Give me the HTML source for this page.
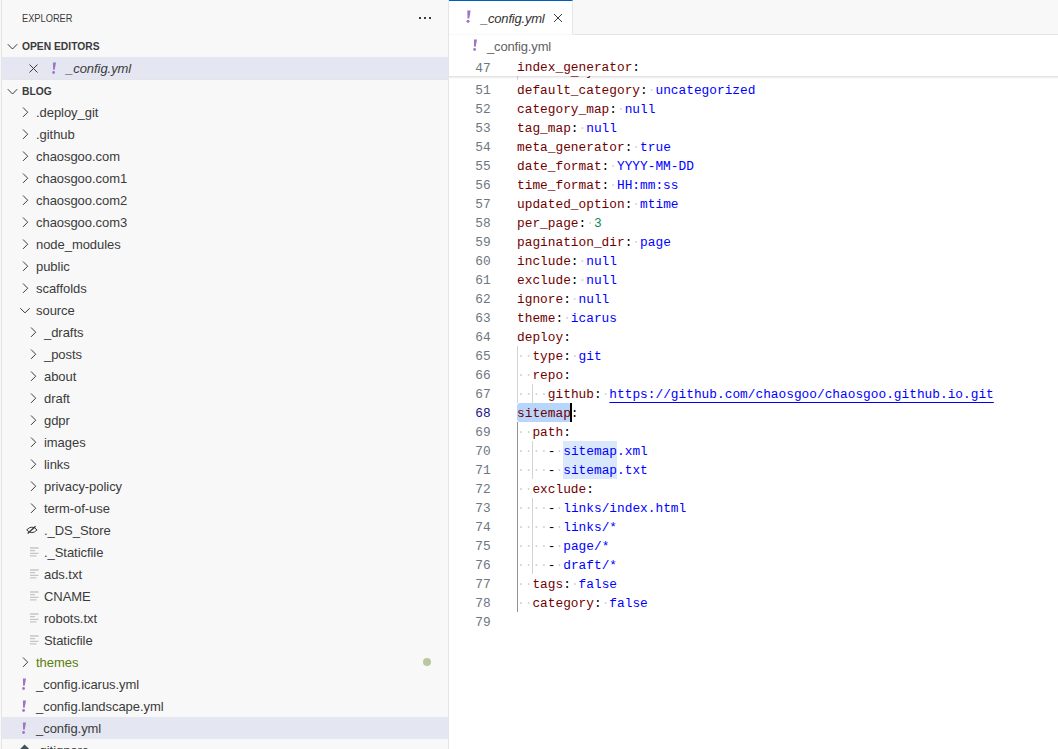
<!DOCTYPE html>
<html><head><meta charset="utf-8"><style>
*{box-sizing:border-box}
html,body{margin:0;padding:0}
body{width:1058px;height:749px;overflow:hidden;position:relative;background:#f8f8f8;font-family:"Liberation Sans",sans-serif;color:#3b3b3b}
.sb{position:absolute;left:0;top:0;width:449px;height:749px;background:#f8f8f8;border-right:1px solid #e5e5e5}
.lb{position:absolute;left:1px;top:0;width:1px;height:749px;background:#e5e5e5}
.title{position:absolute;left:22px;top:11px;font-size:10.6px;line-height:14px;letter-spacing:0;transform:scaleX(0.875);transform-origin:0 0;color:#3b3b3b}
.dots{position:absolute;top:17px;width:2px;height:2px;background:#3b3b3b}
.hdr{position:absolute;left:22px;font-size:11px;font-weight:bold;line-height:22px;height:22px;transform:scaleX(0.935);transform-origin:0 0;color:#3b3b3b}
.r{position:absolute;left:2px;width:446px;height:22px;line-height:22px;font-size:13px;white-space:nowrap}
.r .t{position:absolute;top:1px;letter-spacing:-0.05px}
.r.sel{background:#e4e6f1}
.ic{position:absolute}
.gdot{position:absolute;left:423px;width:8px;height:8px;border-radius:50%;background:#b9c8a0}
.ed{position:absolute;left:449px;top:0;width:609px;height:749px;background:#fff}
.tabs{position:absolute;left:449px;top:0;width:609px;height:35px;background:#f8f8f8;border-bottom:1px solid #e5e5e5}
.tab{position:absolute;left:449px;top:0;width:124px;height:35px;background:#fff;border-right:1px solid #e5e5e5;border-top:1px solid #005fb8;border-bottom:1px solid #f8f8f8}
.tabt{position:absolute;left:481px;top:1px;font-size:13px;line-height:35px;font-style:italic;letter-spacing:-0.2px;color:#333}
.bc{position:absolute;left:487px;top:36px;font-size:13px;line-height:22px;color:#616161;letter-spacing:-0.15px}
.num{position:absolute;left:449px;width:41.6px;text-align:right;height:19px;line-height:19px;font-family:"Liberation Mono",monospace;font-size:12.82px;color:#6e7681}
.num.act{color:#171184}
.cl{position:absolute;left:517px;height:19px;line-height:19px;font-family:"Liberation Mono",monospace;font-size:12.82px;white-space:pre;color:#000}
.cl b{font-weight:normal;color:#700000}
.cl s{text-decoration:none;color:#000}
.cl i{font-style:normal;color:rgba(51,51,51,0.25)}
.cl em{font-style:normal;color:#0000ff}
.cl u.n{text-decoration:none;color:#098658}
.cl .lk{color:#0000ff;text-decoration:underline;text-underline-offset:4px}
.g{position:absolute;width:1px}
.sticky{position:absolute;left:449px;top:57px;width:609px;height:19px;background:#fff}
.shd{position:absolute;left:449px;top:76px;width:609px;height:3px;background:linear-gradient(rgba(0,0,0,0.14),rgba(0,0,0,0.07) 40%,rgba(0,0,0,0))}
.selx{position:absolute;background:#b8d6fb;border-radius:3px}
.hl{position:absolute;background:#dae8fb}
.cur{position:absolute;width:2px;background:#000}
</style></head><body>
<div class="sb"></div>
<div class="lb"></div>
<div class="title">EXPLORER</div>
<div class="dots" style="left:419px"></div><div class="dots" style="left:424px"></div><div class="dots" style="left:429px"></div>
<svg class="ic" style="left:7px;top:43px" width="11" height="8" viewBox="0 0 11 8"><path d="M0.8 1.2 L5.5 6 L10.2 1.2" fill="none" stroke="#3a3a3a" stroke-width="1"/></svg>
<div class="hdr" style="top:35px">OPEN EDITORS</div>
<div class="r sel" style="top:57px"><svg class="ic" style="left:27px;top:7px" width="9" height="9" viewBox="0 0 9 9"><path d="M0.5 0.5L8.5 8.5M8.5 0.5L0.5 8.5" stroke="#3b3b3b" stroke-width="1"/></svg><svg class="ic" style="left:49px;top:5px" width="6" height="13" viewBox="0 0 6 13"><path d="M1.9 0.4 L5.0 0.4 L3.7 7.8 L2.1 7.8 Z" fill="#a074c4"/><circle cx="2.6" cy="10.5" r="1.4" fill="#a074c4"/></svg><span class="t" style="left:64px;font-style:italic">_config.yml</span></div>
<svg class="ic" style="left:7px;top:88px" width="11" height="8" viewBox="0 0 11 8"><path d="M0.8 1.2 L5.5 6 L10.2 1.2" fill="none" stroke="#3a3a3a" stroke-width="1"/></svg>
<div style="position:absolute;left:2px;top:79px;width:446px;height:1px;background:#e5e5e5"></div>
<div class="hdr" style="top:80px">BLOG</div>
<div class="r" style="top:101px"><svg class="ic" style="left:19px;top:6px" width="8" height="11" viewBox="0 0 8 11"><path d="M2 0.5 L6.7 5.2 L2 9.9" fill="none" stroke="#3a3a3a" stroke-width="1"/></svg><span class="t" style="left:34px;">.deploy_git</span></div>
<div class="r" style="top:123px"><svg class="ic" style="left:19px;top:6px" width="8" height="11" viewBox="0 0 8 11"><path d="M2 0.5 L6.7 5.2 L2 9.9" fill="none" stroke="#3a3a3a" stroke-width="1"/></svg><span class="t" style="left:34px;">.github</span></div>
<div class="r" style="top:145px"><svg class="ic" style="left:19px;top:6px" width="8" height="11" viewBox="0 0 8 11"><path d="M2 0.5 L6.7 5.2 L2 9.9" fill="none" stroke="#3a3a3a" stroke-width="1"/></svg><span class="t" style="left:34px;">chaosgoo.com</span></div>
<div class="r" style="top:167px"><svg class="ic" style="left:19px;top:6px" width="8" height="11" viewBox="0 0 8 11"><path d="M2 0.5 L6.7 5.2 L2 9.9" fill="none" stroke="#3a3a3a" stroke-width="1"/></svg><span class="t" style="left:34px;">chaosgoo.com1</span></div>
<div class="r" style="top:189px"><svg class="ic" style="left:19px;top:6px" width="8" height="11" viewBox="0 0 8 11"><path d="M2 0.5 L6.7 5.2 L2 9.9" fill="none" stroke="#3a3a3a" stroke-width="1"/></svg><span class="t" style="left:34px;">chaosgoo.com2</span></div>
<div class="r" style="top:211px"><svg class="ic" style="left:19px;top:6px" width="8" height="11" viewBox="0 0 8 11"><path d="M2 0.5 L6.7 5.2 L2 9.9" fill="none" stroke="#3a3a3a" stroke-width="1"/></svg><span class="t" style="left:34px;">chaosgoo.com3</span></div>
<div class="r" style="top:233px"><svg class="ic" style="left:19px;top:6px" width="8" height="11" viewBox="0 0 8 11"><path d="M2 0.5 L6.7 5.2 L2 9.9" fill="none" stroke="#3a3a3a" stroke-width="1"/></svg><span class="t" style="left:34px;">node_modules</span></div>
<div class="r" style="top:255px"><svg class="ic" style="left:19px;top:6px" width="8" height="11" viewBox="0 0 8 11"><path d="M2 0.5 L6.7 5.2 L2 9.9" fill="none" stroke="#3a3a3a" stroke-width="1"/></svg><span class="t" style="left:34px;">public</span></div>
<div class="r" style="top:277px"><svg class="ic" style="left:19px;top:6px" width="8" height="11" viewBox="0 0 8 11"><path d="M2 0.5 L6.7 5.2 L2 9.9" fill="none" stroke="#3a3a3a" stroke-width="1"/></svg><span class="t" style="left:34px;">scaffolds</span></div>
<div class="r" style="top:299px"><svg class="ic" style="left:17px;top:8px" width="12" height="8" viewBox="0 0 12 8"><path d="M1.3 1.2 L6 5.9 L10.7 1.2" fill="none" stroke="#3a3a3a" stroke-width="1"/></svg><span class="t" style="left:34px;">source</span></div>
<div class="r" style="top:321px"><svg class="ic" style="left:27px;top:6px" width="8" height="11" viewBox="0 0 8 11"><path d="M2 0.5 L6.7 5.2 L2 9.9" fill="none" stroke="#3a3a3a" stroke-width="1"/></svg><span class="t" style="left:42px;">_drafts</span></div>
<div class="r" style="top:343px"><svg class="ic" style="left:27px;top:6px" width="8" height="11" viewBox="0 0 8 11"><path d="M2 0.5 L6.7 5.2 L2 9.9" fill="none" stroke="#3a3a3a" stroke-width="1"/></svg><span class="t" style="left:42px;">_posts</span></div>
<div class="r" style="top:365px"><svg class="ic" style="left:27px;top:6px" width="8" height="11" viewBox="0 0 8 11"><path d="M2 0.5 L6.7 5.2 L2 9.9" fill="none" stroke="#3a3a3a" stroke-width="1"/></svg><span class="t" style="left:42px;">about</span></div>
<div class="r" style="top:387px"><svg class="ic" style="left:27px;top:6px" width="8" height="11" viewBox="0 0 8 11"><path d="M2 0.5 L6.7 5.2 L2 9.9" fill="none" stroke="#3a3a3a" stroke-width="1"/></svg><span class="t" style="left:42px;">draft</span></div>
<div class="r" style="top:409px"><svg class="ic" style="left:27px;top:6px" width="8" height="11" viewBox="0 0 8 11"><path d="M2 0.5 L6.7 5.2 L2 9.9" fill="none" stroke="#3a3a3a" stroke-width="1"/></svg><span class="t" style="left:42px;">gdpr</span></div>
<div class="r" style="top:431px"><svg class="ic" style="left:27px;top:6px" width="8" height="11" viewBox="0 0 8 11"><path d="M2 0.5 L6.7 5.2 L2 9.9" fill="none" stroke="#3a3a3a" stroke-width="1"/></svg><span class="t" style="left:42px;">images</span></div>
<div class="r" style="top:453px"><svg class="ic" style="left:27px;top:6px" width="8" height="11" viewBox="0 0 8 11"><path d="M2 0.5 L6.7 5.2 L2 9.9" fill="none" stroke="#3a3a3a" stroke-width="1"/></svg><span class="t" style="left:42px;">links</span></div>
<div class="r" style="top:475px"><svg class="ic" style="left:27px;top:6px" width="8" height="11" viewBox="0 0 8 11"><path d="M2 0.5 L6.7 5.2 L2 9.9" fill="none" stroke="#3a3a3a" stroke-width="1"/></svg><span class="t" style="left:42px;">privacy-policy</span></div>
<div class="r" style="top:497px"><svg class="ic" style="left:27px;top:6px" width="8" height="11" viewBox="0 0 8 11"><path d="M2 0.5 L6.7 5.2 L2 9.9" fill="none" stroke="#3a3a3a" stroke-width="1"/></svg><span class="t" style="left:42px;">term-of-use</span></div>
<div class="r" style="top:519px"><svg class="ic" style="left:24px;top:5px" width="13" height="12" viewBox="0 0 13 12"><g fill="none" stroke="#333" stroke-width="0.95"><path d="M0.7 5.9 Q5.9 0.4 11.1 5.9 Q5.9 11.4 0.7 5.9Z"/><path d="M1.7 9.5 L9.6 2.3" stroke-width="1.25"/></g></svg><span class="t" style="left:42px;">._DS_Store</span></div>
<div class="r" style="top:541px"><svg class="ic" style="left:27.5px;top:6px" width="10" height="11" viewBox="0 0 10 11"><g stroke="#c5c5c5" stroke-width="1.3"><path d="M0 1H8.5M0 3.6H5M0 6.3H8.5M0 8.9H6.5"/></g></svg><span class="t" style="left:42px;">._Staticfile</span></div>
<div class="r" style="top:563px"><svg class="ic" style="left:27.5px;top:6px" width="10" height="11" viewBox="0 0 10 11"><g stroke="#c5c5c5" stroke-width="1.3"><path d="M0 1H8.5M0 3.6H5M0 6.3H8.5M0 8.9H6.5"/></g></svg><span class="t" style="left:42px;">ads.txt</span></div>
<div class="r" style="top:585px"><svg class="ic" style="left:27.5px;top:6px" width="10" height="11" viewBox="0 0 10 11"><g stroke="#c5c5c5" stroke-width="1.3"><path d="M0 1H8.5M0 3.6H5M0 6.3H8.5M0 8.9H6.5"/></g></svg><span class="t" style="left:42px;">CNAME</span></div>
<div class="r" style="top:607px"><svg class="ic" style="left:27.5px;top:6px" width="10" height="11" viewBox="0 0 10 11"><g stroke="#c5c5c5" stroke-width="1.3"><path d="M0 1H8.5M0 3.6H5M0 6.3H8.5M0 8.9H6.5"/></g></svg><span class="t" style="left:42px;">robots.txt</span></div>
<div class="r" style="top:629px"><svg class="ic" style="left:27.5px;top:6px" width="10" height="11" viewBox="0 0 10 11"><g stroke="#c5c5c5" stroke-width="1.3"><path d="M0 1H8.5M0 3.6H5M0 6.3H8.5M0 8.9H6.5"/></g></svg><span class="t" style="left:42px;">Staticfile</span></div>
<div class="r" style="top:651px"><svg class="ic" style="left:19px;top:6px" width="8" height="11" viewBox="0 0 8 11"><path d="M2 0.5 L6.7 5.2 L2 9.9" fill="none" stroke="#3a3a3a" stroke-width="1"/></svg><span class="t" style="left:34px;color:#587c0c">themes</span></div>
<div class="gdot" style="top:658px"></div>
<div class="r" style="top:673px"><svg class="ic" style="left:19px;top:5px" width="6" height="13" viewBox="0 0 6 13"><path d="M1.9 0.4 L5.0 0.4 L3.7 7.8 L2.1 7.8 Z" fill="#a074c4"/><circle cx="2.6" cy="10.5" r="1.4" fill="#a074c4"/></svg><span class="t" style="left:34px;">_config.icarus.yml</span></div>
<div class="r" style="top:695px"><svg class="ic" style="left:19px;top:5px" width="6" height="13" viewBox="0 0 6 13"><path d="M1.9 0.4 L5.0 0.4 L3.7 7.8 L2.1 7.8 Z" fill="#a074c4"/><circle cx="2.6" cy="10.5" r="1.4" fill="#a074c4"/></svg><span class="t" style="left:34px;">_config.landscape.yml</span></div>
<div class="r sel" style="top:717px"><svg class="ic" style="left:19px;top:5px" width="6" height="13" viewBox="0 0 6 13"><path d="M1.9 0.4 L5.0 0.4 L3.7 7.8 L2.1 7.8 Z" fill="#a074c4"/><circle cx="2.6" cy="10.5" r="1.4" fill="#a074c4"/></svg><span class="t" style="left:34px;">_config.yml</span></div>
<div class="r" style="top:739px"><svg class="ic" style="left:14.5px;top:5px" width="16" height="16" viewBox="0 0 16 16"><path d="M7.6 0.5 L14.7 7.6 L7.6 14.7 L0.5 7.6 Z" fill="#41535b"/></svg><span class="t" style="left:34px;">.gitignore</span></div>
<div class="ed"></div>
<div class="tabs"></div>
<div class="tab"></div>
<svg class="ic" style="left:465px;top:10px" width="7" height="14" viewBox="0 0 6 13"><path d="M1.9 0.4 L5.0 0.4 L3.7 7.8 L2.1 7.8 Z" fill="#a074c4"/><circle cx="2.6" cy="10.5" r="1.4" fill="#a074c4"/></svg>
<div class="tabt">_config.yml</div>
<svg class="ic" style="left:553px;top:13px" width="10" height="10" viewBox="0 0 10 10"><path d="M1 1L9 9M9 1L1 9" stroke="#3b3b3b" stroke-width="1"/></svg>
<svg class="ic" style="left:472px;top:39px" width="6" height="13" viewBox="0 0 6 13"><path d="M1.9 0.4 L5.0 0.4 L3.7 7.8 L2.1 7.8 Z" fill="#a074c4"/><circle cx="2.6" cy="10.5" r="1.4" fill="#a074c4"/></svg>
<div class="bc">_config.yml</div>
<div class="selx" style="left:517px;top:403px;width:54px;height:19px"></div>
<div class="hl" style="left:563.2px;top:441px;width:53.9px;height:38px"></div>
<div class="g" style="left:517.0px;top:61px;height:19px;background:#d3d3d3"></div><div class="g" style="left:517.0px;top:346px;height:57px;background:#d3d3d3"></div><div class="g" style="left:532.4px;top:384px;height:19px;background:#d3d3d3"></div><div class="g" style="left:517.0px;top:422px;height:190px;background:#939393"></div><div class="g" style="left:532.4px;top:441px;height:38px;background:#d3d3d3"></div><div class="g" style="left:532.4px;top:498px;height:76px;background:#d3d3d3"></div>
<div class="num" style="top:62px">50</div><div class="cl" style="top:62px"><i>·</i><i>·</i><b>order_by</b><s>:</s><i>·</i><em>-date</em></div>
<div class="num" style="top:81px">51</div><div class="cl" style="top:81px"><b>default_category</b><s>:</s><i>·</i><em>uncategorized</em></div>
<div class="num" style="top:100px">52</div><div class="cl" style="top:100px"><b>category_map</b><s>:</s><i>·</i><em>null</em></div>
<div class="num" style="top:119px">53</div><div class="cl" style="top:119px"><b>tag_map</b><s>:</s><i>·</i><em>null</em></div>
<div class="num" style="top:138px">54</div><div class="cl" style="top:138px"><b>meta_generator</b><s>:</s><i>·</i><em>true</em></div>
<div class="num" style="top:157px">55</div><div class="cl" style="top:157px"><b>date_format</b><s>:</s><i>·</i><em>YYYY-MM-DD</em></div>
<div class="num" style="top:176px">56</div><div class="cl" style="top:176px"><b>time_format</b><s>:</s><i>·</i><em>HH:mm:ss</em></div>
<div class="num" style="top:195px">57</div><div class="cl" style="top:195px"><b>updated_option</b><s>:</s><i>·</i><em>mtime</em></div>
<div class="num" style="top:214px">58</div><div class="cl" style="top:214px"><b>per_page</b><s>:</s><i>·</i><u class="n">3</u></div>
<div class="num" style="top:233px">59</div><div class="cl" style="top:233px"><b>pagination_dir</b><s>:</s><i>·</i><em>page</em></div>
<div class="num" style="top:252px">60</div><div class="cl" style="top:252px"><b>include</b><s>:</s><i>·</i><em>null</em></div>
<div class="num" style="top:271px">61</div><div class="cl" style="top:271px"><b>exclude</b><s>:</s><i>·</i><em>null</em></div>
<div class="num" style="top:290px">62</div><div class="cl" style="top:290px"><b>ignore</b><s>:</s><i>·</i><em>null</em></div>
<div class="num" style="top:309px">63</div><div class="cl" style="top:309px"><b>theme</b><s>:</s><i>·</i><em>icarus</em></div>
<div class="num" style="top:328px">64</div><div class="cl" style="top:328px"><b>deploy</b><s>:</s></div>
<div class="num" style="top:347px">65</div><div class="cl" style="top:347px"><i>·</i><i>·</i><b>type</b><s>:</s><i>·</i><em>git</em></div>
<div class="num" style="top:366px">66</div><div class="cl" style="top:366px"><i>·</i><i>·</i><b>repo</b><s>:</s></div>
<div class="num" style="top:385px">67</div><div class="cl" style="top:385px"><i>·</i><i>·</i><i>·</i><i>·</i><b>github</b><s>:</s><i>·</i><span class="lk">https://github.com/chaosgoo/chaosgoo.github.io.git</span></div>
<div class="num act" style="top:404px">68</div><div class="cl" style="top:404px"><b>sitemap</b><s>:</s></div>
<div class="num" style="top:423px">69</div><div class="cl" style="top:423px"><i>·</i><i>·</i><b>path</b><s>:</s></div>
<div class="num" style="top:442px">70</div><div class="cl" style="top:442px"><i>·</i><i>·</i><i>·</i><i>·</i><s>-</s><i>·</i><em>sitemap.xml</em></div>
<div class="num" style="top:461px">71</div><div class="cl" style="top:461px"><i>·</i><i>·</i><i>·</i><i>·</i><s>-</s><i>·</i><em>sitemap.txt</em></div>
<div class="num" style="top:480px">72</div><div class="cl" style="top:480px"><i>·</i><i>·</i><b>exclude</b><s>:</s></div>
<div class="num" style="top:499px">73</div><div class="cl" style="top:499px"><i>·</i><i>·</i><i>·</i><i>·</i><s>-</s><i>·</i><em>links/index.html</em></div>
<div class="num" style="top:518px">74</div><div class="cl" style="top:518px"><i>·</i><i>·</i><i>·</i><i>·</i><s>-</s><i>·</i><em>links/*</em></div>
<div class="num" style="top:537px">75</div><div class="cl" style="top:537px"><i>·</i><i>·</i><i>·</i><i>·</i><s>-</s><i>·</i><em>page/*</em></div>
<div class="num" style="top:556px">76</div><div class="cl" style="top:556px"><i>·</i><i>·</i><i>·</i><i>·</i><s>-</s><i>·</i><em>draft/*</em></div>
<div class="num" style="top:575px">77</div><div class="cl" style="top:575px"><i>·</i><i>·</i><b>tags</b><s>:</s><i>·</i><em>false</em></div>
<div class="num" style="top:594px">78</div><div class="cl" style="top:594px"><i>·</i><i>·</i><b>category</b><s>:</s><i>·</i><em>false</em></div>
<div class="num" style="top:613px">79</div><div class="cl" style="top:613px"></div>
<div class="cur" style="left:570px;top:403px;height:19px"></div>
<div class="sticky"><div class="num" style="left:0;top:2px">47</div><div class="cl" style="left:68px;top:1px"><b>index_generator</b><s>:</s></div></div>
<div class="shd"></div>
</body></html>
